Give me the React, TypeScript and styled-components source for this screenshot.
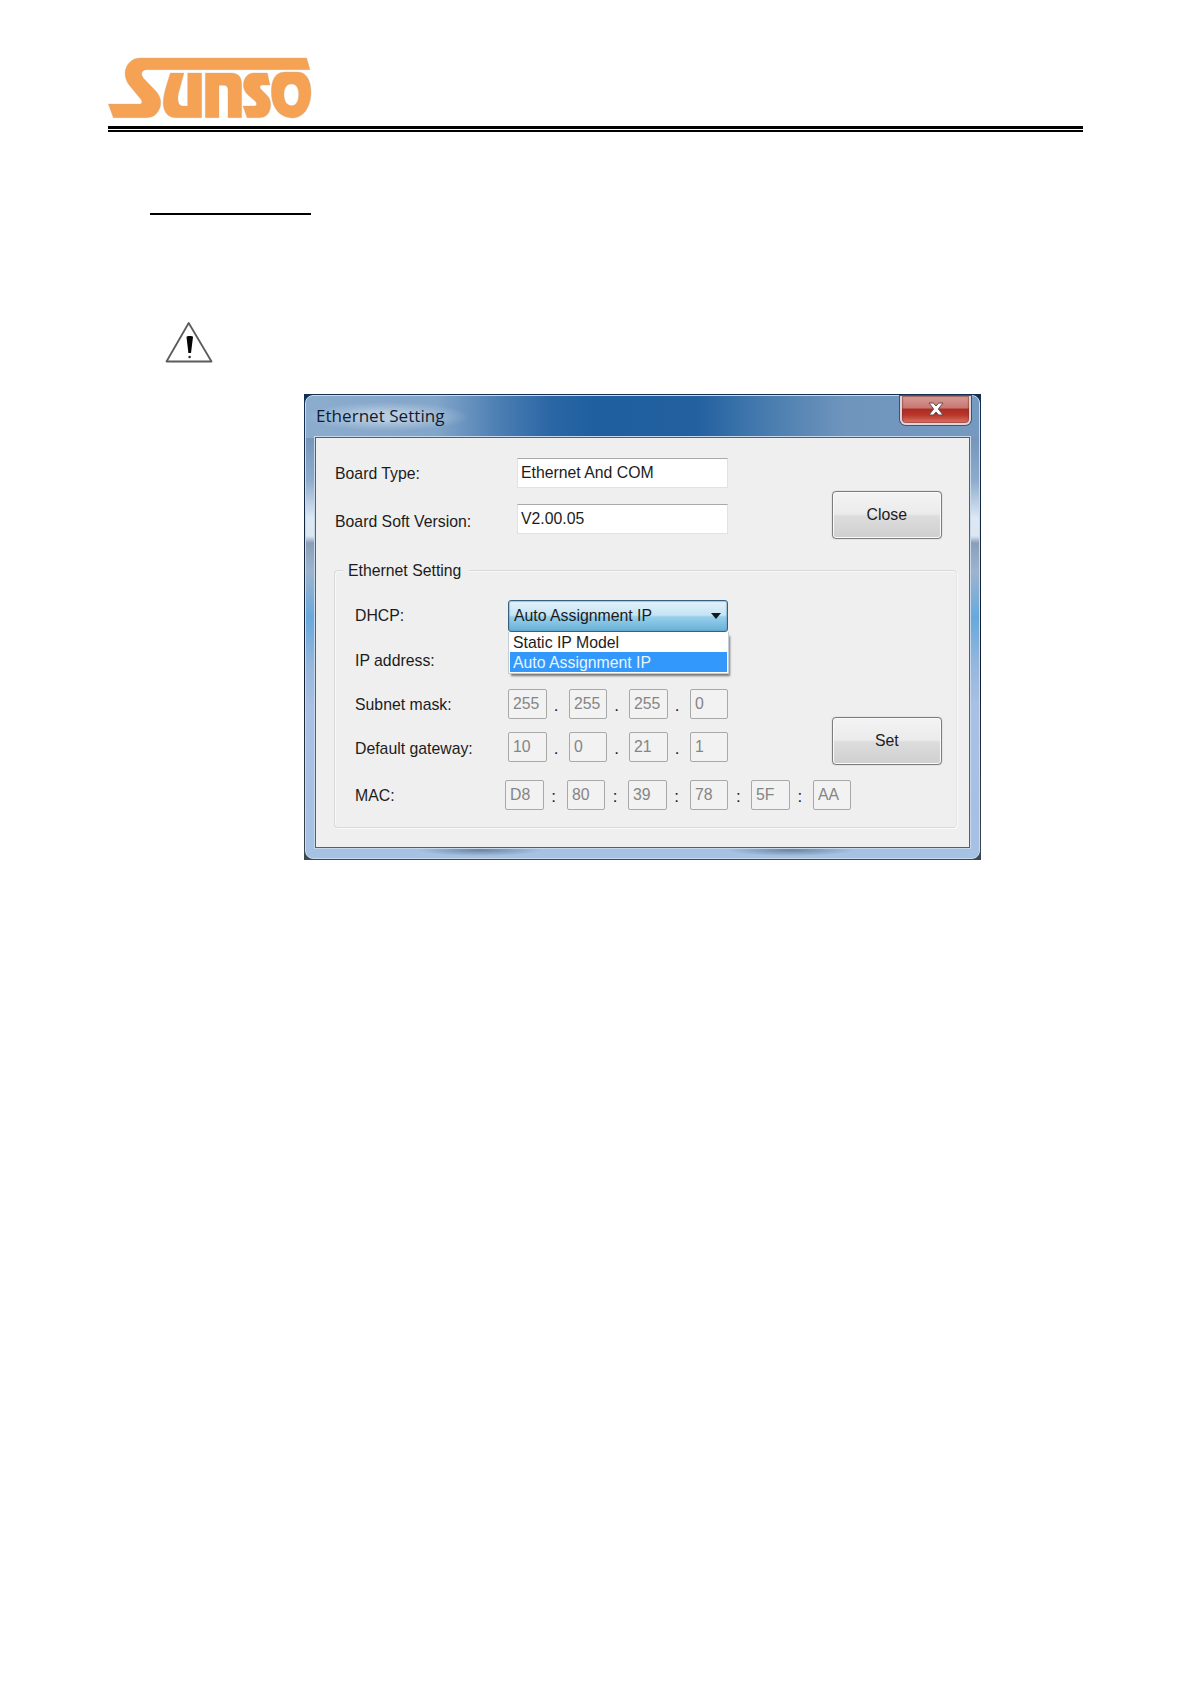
import React from "react";
import styled, { createGlobalStyle } from "styled-components";

const GlobalStyle = createGlobalStyle`
  *, *::before, *::after { box-sizing: border-box; }
  html, body { margin: 0; background: #fff; }
`;

const Page = styled.main`
  display: flex;
  flex-direction: column;
  align-items: flex-start;
  width: 1191px;
  height: 1684px;
  padding: 57px 108px 0;
  overflow: hidden;
  background: #fff;
  color: #1c1c1c;
  font: 17px/20px "Liberation Sans", Arial, sans-serif;
`;

const Header = styled.header`
  display: flex;
  flex-direction: column;
  align-items: flex-start;
  width: 975px;
  height: 75px;
  border-bottom: 2px solid #000;
`;

const Logo = styled.svg`
  display: block;
  width: 204px;
  height: 62px;
`;

const ThickRule = styled.div`
  width: 100%;
  height: 3px;
  margin-top: 7px;
  background: #000;
`;

const HeadingLine = styled.div`
  width: 161px;
  height: 2px;
  margin: 81px 0 0 42px;
  background: #000;
`;

const Warning = styled.svg`
  width: 50px;
  height: 44px;
  margin: 105px 0 0 56px;
`;

const Backdrop = styled.section`
  width: 677px;
  height: 466px;
  margin: 30px 0 0 196px;
  background: linear-gradient(#14304f, #101d30 60%, #3f474f);
  padding: 1px;
`;

const Window = styled.div`
  display: flex;
  flex-direction: column;
  width: 675px;
  height: 464px;
  padding: 0 9px 10px;
  border: 1px solid #c6dcf0;
  border-radius: 8px;
  background:
    radial-gradient(ellipse 62px 6px at 174px 454px, #53687fb0, #6c86a500) no-repeat,
    radial-gradient(ellipse 64px 6px at 485px 454px, #53687fb0, #6c86a500) no-repeat,
    linear-gradient(90deg, #8caccd 0, #82a5ca 130px, #4a7db2 195px, #2a66a5 245px, #1f5f9f 290px, #2260a0 390px, #487caf 460px, #7095bd 540px, #7599bf 100%) 0 0 / 100% 42px no-repeat,
    linear-gradient(#7595ba 42px, #8faccc 85px, #dce8f4 122px, #dce6f0 140px, #8b9eb7 147px, #9db4ce 175px, #67a9dc 222px, #96b7dd 270px, #a9c0e4 310px, #a5c1e4 100%);
`;

const TitleBar = styled.div`
  display: flex;
  justify-content: space-between;
  align-items: flex-start;
  height: 41px;
  flex: none;
`;

const Title = styled.h1`
  margin: 6px 0 0 -9px;
  padding: 2px 24px 3px 10px;
  border-radius: 14px;
  background: radial-gradient(ellipse at center, #d4e2efa0 20%, #b5cadf66 50%, #a5bdd800 72%);
  color: #101c2c;
  font: 400 17px/24px "Open Sans", "Noto Sans", sans-serif;
  white-space: nowrap;
`;

const TitleText = styled.span`
  display: inline-block;
  transform: scaleX(1.005);
  transform-origin: left;
`;

const CloseX = styled.button`
  display: flex;
  align-items: center;
  justify-content: center;
  width: 71px;
  height: 29px;
  margin-right: -1px;
  padding: 0 0 2px;
  border: 2px solid #dfd4d9;
  border-top: 0;
  border-radius: 0 0 6px 6px;
  background: linear-gradient(#d69c98 0, #c87771 44%, #ad2c22 49%, #b93429 70%, #dc7768 100%);
  box-shadow: 0 0 0 1px #45506a, inset 0 0 1px 1px #71332f80;
`;

const Client = styled.div`
  flex: 1;
  width: 655px;
  border: 1px solid #47617e;
  outline: 1px solid #c6d8eb;
  background: #efefef;
`;

const BoardInfo = styled.div`
  display: grid;
  grid-template-columns: 182px 211px 110px;
  grid-template-rows: 47px 46px;
  height: 132px;
  padding: 11px 0 0 19px;
  align-items: center;
`;

const Condensed = styled.span<{ $center?: boolean }>`
  display: inline-block;
  white-space: nowrap;
  transform: scaleX(0.93);
  transform-origin: ${(p) => (p.$center ? "center" : "left")};
`;

const Label = styled.label<{ $drop?: number }>`
  padding-top: ${(p) => p.$drop ?? 0}px;
`;

const ReadOnly = styled.output`
  display: block;
  height: 30px;
  padding: 4px 0 0 3px;
  border: 1px solid #e2e2e2;
  border-top-color: #a9a9a9;
  background: #fff;
`;

const PushButton = styled.button`
  width: 110px;
  height: 48px;
  padding: 0;
  border: 1px solid #7c7c7c;
  border-radius: 4px;
  background: linear-gradient(#f3f3f3 0, #ebebeb 48%, #dddddd 52%, #cfcfcf 100%);
  box-shadow: inset 0 0 0 1px #fafafa, 0 0 1px #888;
  color: #1c1c1c;
  font: inherit;
`;

const CloseButton = styled(PushButton)`
  grid-column: 3;
  grid-row: 1 / 3;
  align-self: end;
  margin: 0 0 3px 104px;
`;

const SetButton = styled(PushButton)`
  grid-column: 3;
  grid-row: 3 / 5;
  align-self: end;
  margin-bottom: 5px;
`;

const GroupFrame = styled.div`
  width: 623px;
  height: 258px;
  margin: 0 0 0 18px;
  border: 1px solid #d7dadd;
  border-right-color: #e3e5e6;
  border-radius: 4px;
  box-shadow: 1px 1px 0 #fbfbfb, inset 1px 1px 0 #f8f8f8;
`;

const Legend = styled.h2`
  width: 126px;
  height: 20px;
  margin: -10px 0 0 8px;
  padding-left: 5px;
  background: #efefef;
  font: inherit;
`;

const Settings = styled.div`
  display: grid;
  grid-template-columns: 153px 324px 110px;
  grid-template-rows: 47px 44px 41px 46px 50px;
  align-items: center;
  padding: 11px 0 0 20px;
`;

const Combo = styled.div`
  position: relative;
  display: flex;
  align-items: center;
  justify-content: space-between;
  width: 220px;
  height: 32px;
  padding: 0 6px 0 5px;
  border: 1px solid #37607e;
  border-radius: 3px;
  background: linear-gradient(#e3f2fa 0, #c5e4f5 47%, #98cfeb 53%, #67b1d8 100%);
  box-shadow: inset 0 0 1px 1px #6a9cbb88;
`;

const Arrow = styled.span`
  border: 5.5px solid transparent;
  border-top: 6px solid #101820;
  border-bottom: 0;
`;

const Menu = styled.ul`
  position: absolute;
  z-index: 1;
  top: 31px;
  left: -1px;
  width: 221px;
  margin: 0;
  padding: 0 1px 1px;
  border: 1px solid #c4ccd3;
  border-top: 0;
  list-style: none;
  background: #fff;
  box-shadow: 2px 3px 2px -1px #777;
`;

const Option = styled.li<{ $active?: boolean }>`
  height: 20px;
  padding-left: 3px;
  line-height: 21px;
  background: ${(p) => (p.$active ? "#3398fb" : "#fff")};
  color: ${(p) => (p.$active ? "#e8f4ff" : "#1c1c1c")};
`;

const Parts = styled.div<{ $wide?: boolean }>`
  display: flex;
  align-items: center;
  grid-column: ${(p) => (p.$wide ? "2 / 4" : "2")};
  margin-left: ${(p) => (p.$wide ? -3 : 0)}px;
`;

const Part = styled.output`
  flex: none;
  width: 38.5px;
  height: 30px;
  padding: 4px 0 0 4px;
  border: 1px solid #a9a9a9;
  border-radius: 2px;
  background: #f2f2f2;
  color: #858585;
`;

const Separator = styled.span<{ $wide?: boolean }>`
  flex: none;
  width: ${(p) => (p.$wide ? 23.1 : 22.1)}px;
  padding: 4px 3px 0 0;
  text-align: center;
`;

const Address = ({ values, mark, wide }: { values: string[]; mark: string; wide?: boolean }) => (
  <Parts $wide={wide}>
    {values.map((value, i) => (
      <React.Fragment key={i}>
        {i > 0 && <Separator $wide={wide}>{mark}</Separator>}
        <Part><Condensed>{value}</Condensed></Part>
      </React.Fragment>
    ))}
  </Parts>
);

const FieldLabel = ({ children, drop }: { children: string; drop?: number }) => (
  <Label $drop={drop}><Condensed>{children}</Condensed></Label>
);

export default function App() {
  return (
    <Page>
      <GlobalStyle />
      <Header>
        <Logo viewBox="24 36 612 186" aria-label="Sunso">
          <g fill="#f5a255" stroke="#c9a98c" strokeWidth="1">
            <path d="M122 39H620L630 74H139C122 76 122 91 132 101L168 139C186 159 187 184 171 204C161 216 150 218 135 218H40L25 177H120C128 175 127 168 120 160L88 121C71 99 71 72 87 54C96 43 108 39 122 39Z" />
            <path d="M211 84H252L235 147C232 165 234 182 248 183H263V84H305V218H226C199 218 187 193 190 166C192 140 203 110 211 84Z" />
            <path d="M316 84H394C418 84 425 99 425 118V218H384V136C384 126 380 121 371 121H357V218H316Z" />
            <path d="M461 84H502L510 120H486C479 121 478 127 483 133L501 151C514 163 515 184 507 201C501 213 491 218 478 218H441L429 183H462C471 183 472 176 466 169L445 151C428 137 426 113 437 97C444 87 451 84 461 84Z" />
            <path fillRule="evenodd" d="M554 81H594C621 82 633 109 633 142C633 180 615 218 578 219C536 219 514 183 514 142C514 109 522 82 554 81ZM575 117C558 117 552 132 552 148C552 168 560 182 575 182C590 182 596 166 596 148C596 131 590 117 575 117Z" />
          </g>
        </Logo>
        <ThickRule />
      </Header>

      <HeadingLine />

      <Warning viewBox="0 0 50 44" aria-label="Warning">
        <path d="M24.7 3L2.5 41.5H47.5Z" fill="none" stroke="#5b5b5b" strokeWidth="1.8" strokeLinejoin="round" />
        <path d="M22.5 17C22.5 15.8 29 15.8 29 17L27 33H24.4Z" fill="#050505" />
        <circle cx="25.6" cy="37" r="1.3" fill="#333" />
      </Warning>

      <Backdrop>
        <Window>
          <TitleBar>
            <Title><TitleText>Ethernet Setting</TitleText></Title>
            <CloseX aria-label="Close">
              <svg width="18" height="16" viewBox="0 0 18 16">
                <path d="M2 2H6.4L9 5L11.6 2H16L11.4 8L16 14H11.6L9 11L6.4 14H2L6.6 8Z" fill="#fff" stroke="#68494f" strokeWidth="1" />
              </svg>
            </CloseX>
          </TitleBar>
          <Client>
            <BoardInfo>
              <FieldLabel drop={2}>Board Type:</FieldLabel>
              <ReadOnly><Condensed>Ethernet And COM</Condensed></ReadOnly>
              <FieldLabel drop={6}>Board Soft Version:</FieldLabel>
              <ReadOnly><Condensed>V2.00.05</Condensed></ReadOnly>
              <CloseButton><Condensed $center>Close</Condensed></CloseButton>
            </BoardInfo>
            <GroupFrame>
              <Legend><Condensed>Ethernet Setting</Condensed></Legend>
              <Settings>
                <FieldLabel>DHCP:</FieldLabel>
                <Combo>
                  <Condensed>Auto Assignment IP</Condensed>
                  <Arrow />
                  <Menu>
                    <Option><Condensed>Static IP Model</Condensed></Option>
                    <Option $active><Condensed>Auto Assignment IP</Condensed></Option>
                  </Menu>
                </Combo>
                <span />
                <FieldLabel>IP address:</FieldLabel>
                <span />
                <span />
                <FieldLabel drop={3}>Subnet mask:</FieldLabel>
                <Address values={["255", "255", "255", "0"]} mark="." />
                <SetButton><Condensed $center>Set</Condensed></SetButton>
                <FieldLabel drop={3}>Default gateway:</FieldLabel>
                <Address values={["10", "0", "21", "1"]} mark="." />
                <FieldLabel drop={2}>MAC:</FieldLabel>
                <Address values={["D8", "80", "39", "78", "5F", "AA"]} mark=":" wide />
              </Settings>
            </GroupFrame>
          </Client>
        </Window>
      </Backdrop>
    </Page>
  );
}
